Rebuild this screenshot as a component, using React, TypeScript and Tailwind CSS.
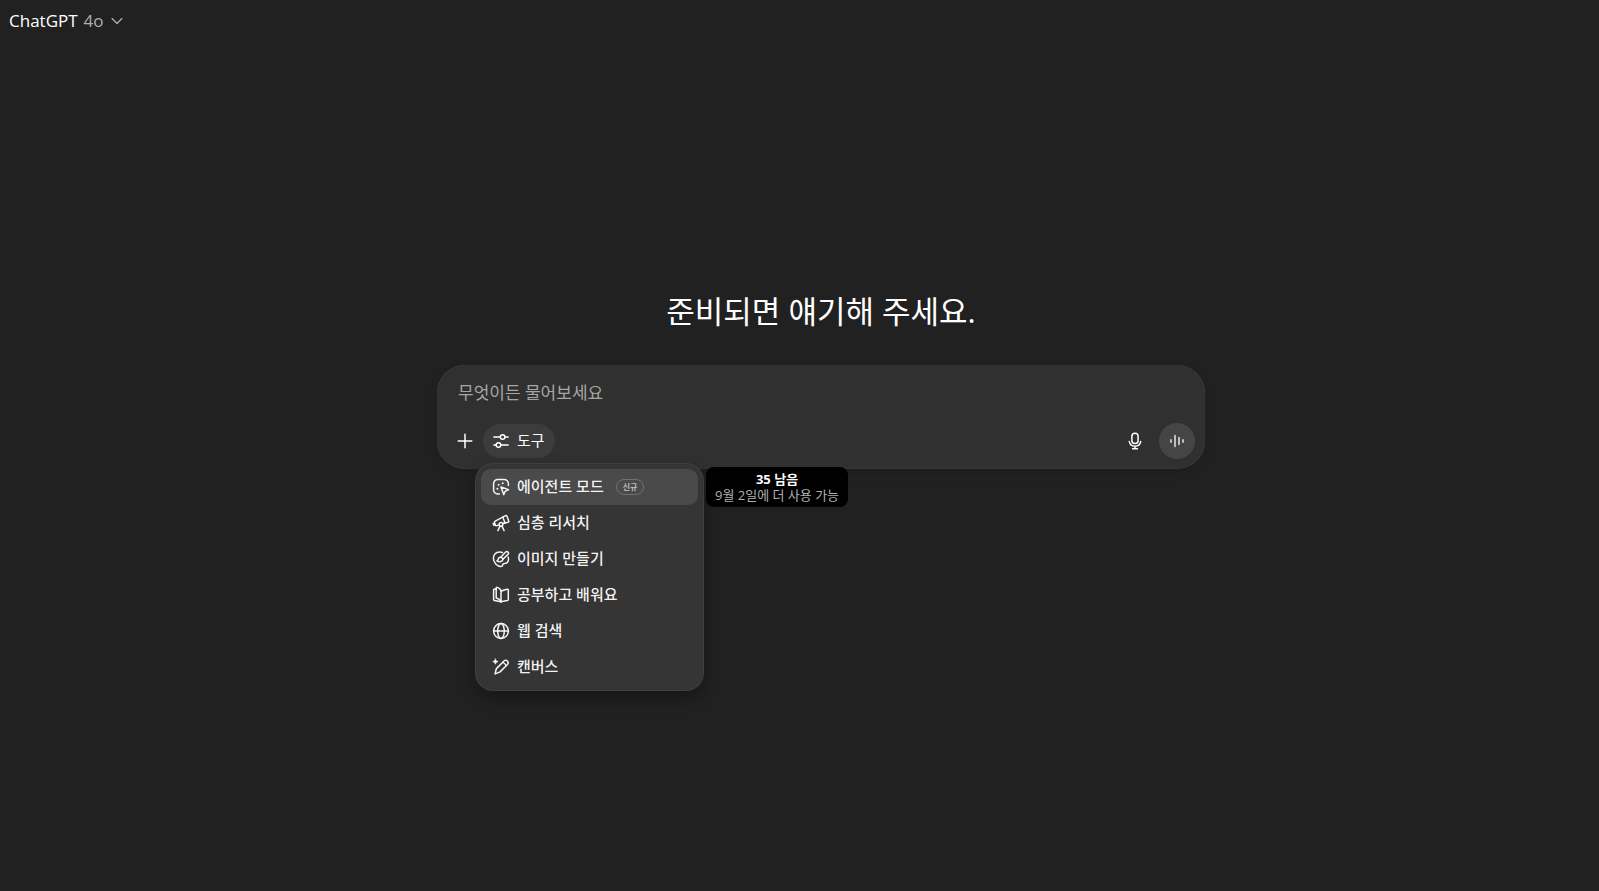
import { useState } from "react";
import type { ReactNode } from "react";

function Icon({ children, className = "h-5 w-5" }: { children: ReactNode; className?: string }) {
  return (
    <svg
      viewBox="0 0 20 20"
      fill="none"
      stroke="currentColor"
      strokeWidth="1.5"
      strokeLinecap="round"
      strokeLinejoin="round"
      className={`shrink-0 ${className}`}
      aria-hidden="true"
    >
      {children}
    </svg>
  );
}

const tools = [
  {
    label: "에이전트 모드",
    badge: "신규",
    icon: (
      <Icon>
        <path d="M8.3 17H6.8A4.2 4.2 0 0 1 2.6 12.8V6.8A4.2 4.2 0 0 1 6.8 2.6H13.2A4.2 4.2 0 0 1 17.4 6.8V8.6" />
        <path d="M10 9.9 17.6 12.6 14.2 14.2 12.7 17.6Z" />
        <g fill="currentColor" stroke="none">
          <circle cx="7.6" cy="7.8" r="1" />
          <circle cx="11.7" cy="6.2" r="1" />
          <circle cx="6.4" cy="11.8" r="1" />
        </g>
      </Icon>
    ),
  },
  {
    label: "심층 리서치",
    icon: (
      <Icon>
        <path d="M11.8 4.1 14.4 2.7Q15.5 2.2 16 3.3L17.7 7.9Q18 9 16.9 9.3L14 9.9Z" />
        <path d="M11.8 4.1 4.2 8.1Q3.2 8.7 3.5 9.7L4.3 11.9Q4.7 12.9 5.8 12.6L8.1 12M11.9 10.4 14 9.9" />
        <path d="M3.6 9.8 2.2 10.6 2.9 12.3 4.4 12" />
        <circle cx="10" cy="11.4" r="1.8" />
        <path d="M9 13.1 6.9 17.6M11 13.1 13.1 17.6" />
      </Icon>
    ),
  },
  {
    label: "이미지 만들기",
    icon: (
      <Icon>
        <path d="M11.4 3.5C10.4 3 9.4 2.9 8.2 3 5 3.1 2.4 5.6 2.4 9.1 2.4 13.7 6.2 17.5 10 17.5 11.2 17.5 11.6 16.7 11.7 15.8 11.8 14.8 12.4 14.3 13.5 14.4 16.2 14.7 17.5 12.7 17.5 10.1 17.5 9.4 17.4 8.8 17.1 8.1" />
        <path d="M9.8 8.2 14.6 3.1Q15.8 2 17 3.1 18.1 4.3 17 5.4L11.9 10.2" />
        <path d="M9.8 8.2C8.3 8.1 7.4 8.9 7.3 10.1 7.2 11 6.7 11.5 5.9 11.9 8.2 13.3 11.8 12.7 11.9 10.2Q11.4 8.6 9.8 8.2Z" />
      </Icon>
    ),
  },
  {
    label: "공부하고 배워요",
    icon: (
      <Icon>
        <path d="M10 6.1V16.8M10 6.1C12.2 5.6 14.1 4.7 16.1 4.2Q17.3 4 17.3 5.2V14.5Q17.3 15.3 16.5 15.5C14.1 15.9 12.1 16.4 10 16.8" />
        <path d="M5.2 4.4 3.7 4.1Q2.6 4 2.6 5.1V14.4Q2.6 15.3 3.5 15.5L10 16.8" />
        <path d="M5.2 13.1V3.2Q5.2 1.8 6.4 2.4C8.4 3.3 10 4.3 10 6.1M5.2 13.1C7.5 13.7 9.4 14.8 10 16.8" />
      </Icon>
    ),
  },
  {
    label: "웹 검색",
    icon: (
      <Icon>
        <circle cx="10" cy="10" r="7.4" />
        <ellipse cx="10" cy="10" rx="3.3" ry="7.4" />
        <path d="M2.6 10H17.4" />
      </Icon>
    ),
  },
  {
    label: "캔버스",
    icon: (
      <Icon>
        <path d="M4.1 16.9 5.1 12.5Q5.3 11.7 5.9 11.1L13 4Q14.7 2.5 16.4 4 18 5.8 16.4 7.5L9.3 14.6Q8.7 15.1 7.9 15.4Z" />
        <path d="M11.7 5.4Q14.1 6.2 15.1 8.7" />
        <path
          d="M4.4 1.9Q4.8 4.2 7.1 4.6 4.8 5 4.4 7.3 4 5 1.7 4.6 4 4.2 4.4 1.9Z"
          fill="currentColor"
          strokeWidth="0.5"
        />
      </Icon>
    ),
  },
];

function ToolsMenu() {
  return (
    <ul
      role="menu"
      aria-label="도구"
      className="absolute top-[39px] -left-2 z-10 w-[229px] rounded-[18px] bg-[#353535] p-1.5 shadow-[0_8px_16px_rgba(0,0,0,0.3),inset_0_0_0_1px_rgba(255,255,255,0.05)]"
    >
      {tools.map((tool, i) => (
        <li key={tool.label} role="none" className="relative">
          <button
            type="button"
            role="menuitem"
            className={`flex h-9 w-full items-center gap-1.5 rounded-[10px] px-2.5 text-[15px] font-medium text-white/95 hover:bg-[#4a4a4a] ${
              i === 0 ? "bg-[#4a4a4a]" : ""
            }`}
          >
            {tool.icon}
            <span className="pb-0.5">{tool.label}</span>
            {tool.badge && (
              <span className="ml-1.5 flex h-4 items-center rounded-full border border-[#717171] px-1.5 text-[8px] font-bold text-[#bdbdbd]">
                {tool.badge}
              </span>
            )}
          </button>
          {i === 0 && (
            <div
              role="tooltip"
              className="absolute -top-0.5 left-full ml-2 rounded-lg bg-black px-[9px] py-1 text-center text-[13px] leading-4 whitespace-nowrap"
            >
              <p className="font-bold text-white">35 남음</p>
              <p className="text-[#afafaf]">9월 2일에 더 사용 가능</p>
            </div>
          )}
        </li>
      ))}
    </ul>
  );
}

function Composer() {
  const [open, setOpen] = useState(true);

  return (
    <form
      onSubmit={(e) => e.preventDefault()}
      className="w-full max-w-3xl rounded-[28px] bg-[#303030] p-2.5 shadow-[0_4px_12px_rgba(0,0,0,0.12),inset_0_0_1px_rgba(255,255,255,0.25)]"
    >
      <input
        type="text"
        aria-label="메시지"
        placeholder="무엇이든 물어보세요"
        className="mb-3 block h-9 w-full bg-transparent px-[11px] pb-0.5 text-[17px] text-white outline-none placeholder:text-[#a6a6a6]"
      />
      <div className="flex h-9 items-center">
        <button type="button" aria-label="추가" className="flex h-9 w-9 items-center justify-center rounded-full text-white">
          <Icon>
            <path d="M10 3.2V16.8M3.2 10H16.8" />
          </Icon>
        </button>
        <div className="relative">
          <button
            type="button"
            aria-haspopup="menu"
            aria-expanded={open}
            onClick={() => setOpen(!open)}
            className="flex h-[34px] items-center gap-1.5 rounded-full bg-[#3c3c3c] pr-2.5 pl-2 text-[15px] text-white"
          >
            <Icon>
              <path d="M2.9 6H9.3M13.9 6H17.1M2.9 14H5.1M9.9 14H17.1" />
              <circle cx="11.6" cy="6" r="2.3" />
              <circle cx="7.5" cy="14" r="2.3" />
            </Icon>
            <span className="pb-0.5">도구</span>
          </button>
          {open && <ToolsMenu />}
        </div>
        <div className="ml-auto flex items-center gap-1.5">
          <button type="button" aria-label="음성 입력" className="flex h-9 w-9 items-center justify-center rounded-full text-white">
            <Icon>
              <rect x="6.9" y="2.2" width="6.2" height="10.4" rx="3.1" />
              <path d="M4.3 10.6C4.9 13.5 7.1 15.2 10 15.2S15.1 13.5 15.7 10.6M10 15.2V17.6M7.6 17.7H12.4" />
            </Icon>
          </button>
          <button
            type="button"
            aria-label="음성 모드"
            className="flex h-9 w-9 items-center justify-center rounded-full bg-[#454545] text-[#d4d4d4]"
          >
            <Icon>
              <path d="M4 8.9V11.1M8 4.7V15.3M12 6.7V13.3M16 8.9V11.1" strokeWidth="1.7" />
            </Icon>
          </button>
        </div>
      </div>
    </form>
  );
}

export default function App() {
  return (
    <div className="flex min-h-screen flex-col bg-[#212121] font-['Open_Sans','Noto_Sans_CJK_KR',sans-serif] text-white">
      <header className="flex h-[42px] items-center px-[9px]">
        <button type="button" className="flex items-center gap-1.5 text-[17px] leading-7">
          <span>ChatGPT</span>
          <span className="text-[#afafaf]">4o</span>
          <Icon className="h-3.5 w-3.5 text-[#afafaf]">
            <path d="M3 6.5 10 13.5 17 6.5" strokeWidth="1.8" />
          </Icon>
        </button>
      </header>
      <main className="flex flex-1 flex-col items-center pt-[249px] pl-[43px]">
        <h1 className="mb-[34px] text-[31px] leading-10">준비되면 얘기해 주세요.</h1>
        <Composer />
      </main>
    </div>
  );
}
